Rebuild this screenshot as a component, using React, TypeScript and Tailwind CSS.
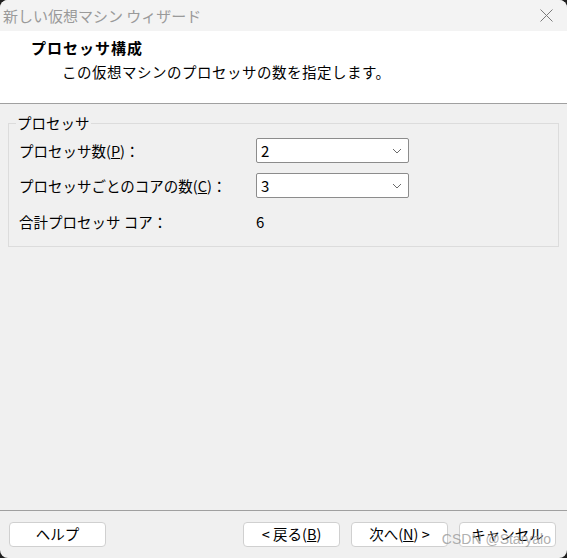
const jp = { fontFamily: '"Noto Sans CJK JP", "Noto Sans", sans-serif' };

const ComboBox = ({ value }: { value: string }) => (
  <div className="flex h-[25px] w-[153px] items-center justify-between rounded-[2px] border border-[#8c8c8c] bg-white pl-[4px] pr-[6px]">
    <span className="text-[15px] leading-none text-black">{value}</span>
    <svg width="10" height="6" viewBox="0 0 10 6" className="text-[#6b6b6b]">
      <path d="M1 1l4 4 4-4" fill="none" stroke="currentColor" strokeWidth="1" />
    </svg>
  </div>
);

const WizardButton = ({ children }: { children: React.ReactNode }) => (
  <button className="flex h-[25px] w-[97px] items-center justify-center rounded-[4px] border border-[#d0d0d0] bg-white text-[14.5px] leading-none text-black">
    {children}
  </button>
);

export default function App() {
  return (
    <div className="h-[558px] w-[567px] bg-[#202020]" style={jp}>
      <div className="relative flex h-full flex-col overflow-hidden rounded-[8px] bg-[#f0f0f0]">
        {/* title bar */}
        <div className="flex h-[31px] items-center justify-between bg-[#f3f3f3] pl-[3px] pr-[14px]">
          <span className="text-[15px] leading-none text-[#9a9a9a]">新しい仮想マシン ウィザード</span>
          <svg width="13" height="13" viewBox="0 0 13 13" className="text-[#7a7a7a]">
            <path d="M0.5 0.5l12 12M12.5 0.5l-12 12" stroke="currentColor" strokeWidth="1" />
          </svg>
        </div>

        {/* header */}
        <div className="h-[73px] border-b border-[#a0a0a0] bg-white pl-[31px] pt-[7px]">
          <div className="text-[15px] font-bold leading-[20px] tracking-[1px] text-black">プロセッサ構成</div>
          <div className="mt-[4px] pl-[31px] text-[14.5px] leading-[20px] tracking-[0.5px] text-black">
            この仮想マシンのプロセッサの数を指定します。
          </div>
        </div>

        {/* body */}
        <div className="flex-1 px-[8px] pt-[10px]">
          <fieldset className="border border-[#dcdcdc] pb-[14px] pl-[10px]">
            <legend className="ml-[-3px] px-[1px] text-[14.5px] leading-[18px] text-black">プロセッサ</legend>
            <div className="flex flex-col pt-[6px] text-[14.5px] text-black">
              <div className="grid grid-cols-[237px_1fr] items-center">
                <span>
                  プロセッサ数(<span className="underline">P</span>)：
                </span>
                <ComboBox value="2" />
              </div>
              <div className="mt-[10px] grid grid-cols-[237px_1fr] items-center">
                <span>
                  プロセッサごとのコアの数(<span className="underline">C</span>)：
                </span>
                <ComboBox value="3" />
              </div>
              <div className="mt-[14px] grid h-[20px] grid-cols-[237px_1fr] items-center leading-[20px]">
                <span>合計プロセッサ コア：</span>
                <span className="text-[15px]">6</span>
              </div>
            </div>
          </fieldset>
        </div>

        {/* footer */}
        <div className="flex h-[48px] items-start border-t border-[#a0a0a0] pl-[9px] pr-[11px] pt-[11px]">
          <WizardButton>ヘルプ</WizardButton>
          <div className="ml-auto flex gap-[11px]">
            <WizardButton>
              &lt;&nbsp;戻る(<span className="underline">B</span>)
            </WizardButton>
            <WizardButton>
              次へ(<span className="underline">N</span>)&nbsp;&gt;
            </WizardButton>
            <WizardButton>キャンセル</WizardButton>
          </div>
        </div>

        <span
          className="pointer-events-none absolute bottom-[12px] right-[16px] text-[14px] leading-none text-[#9a9a9a]/80"
          style={{ fontFamily: '"Liberation Sans", Arial, sans-serif' }}
        >
          CSDN @Staryalo
        </span>
      </div>
    </div>
  );
}
